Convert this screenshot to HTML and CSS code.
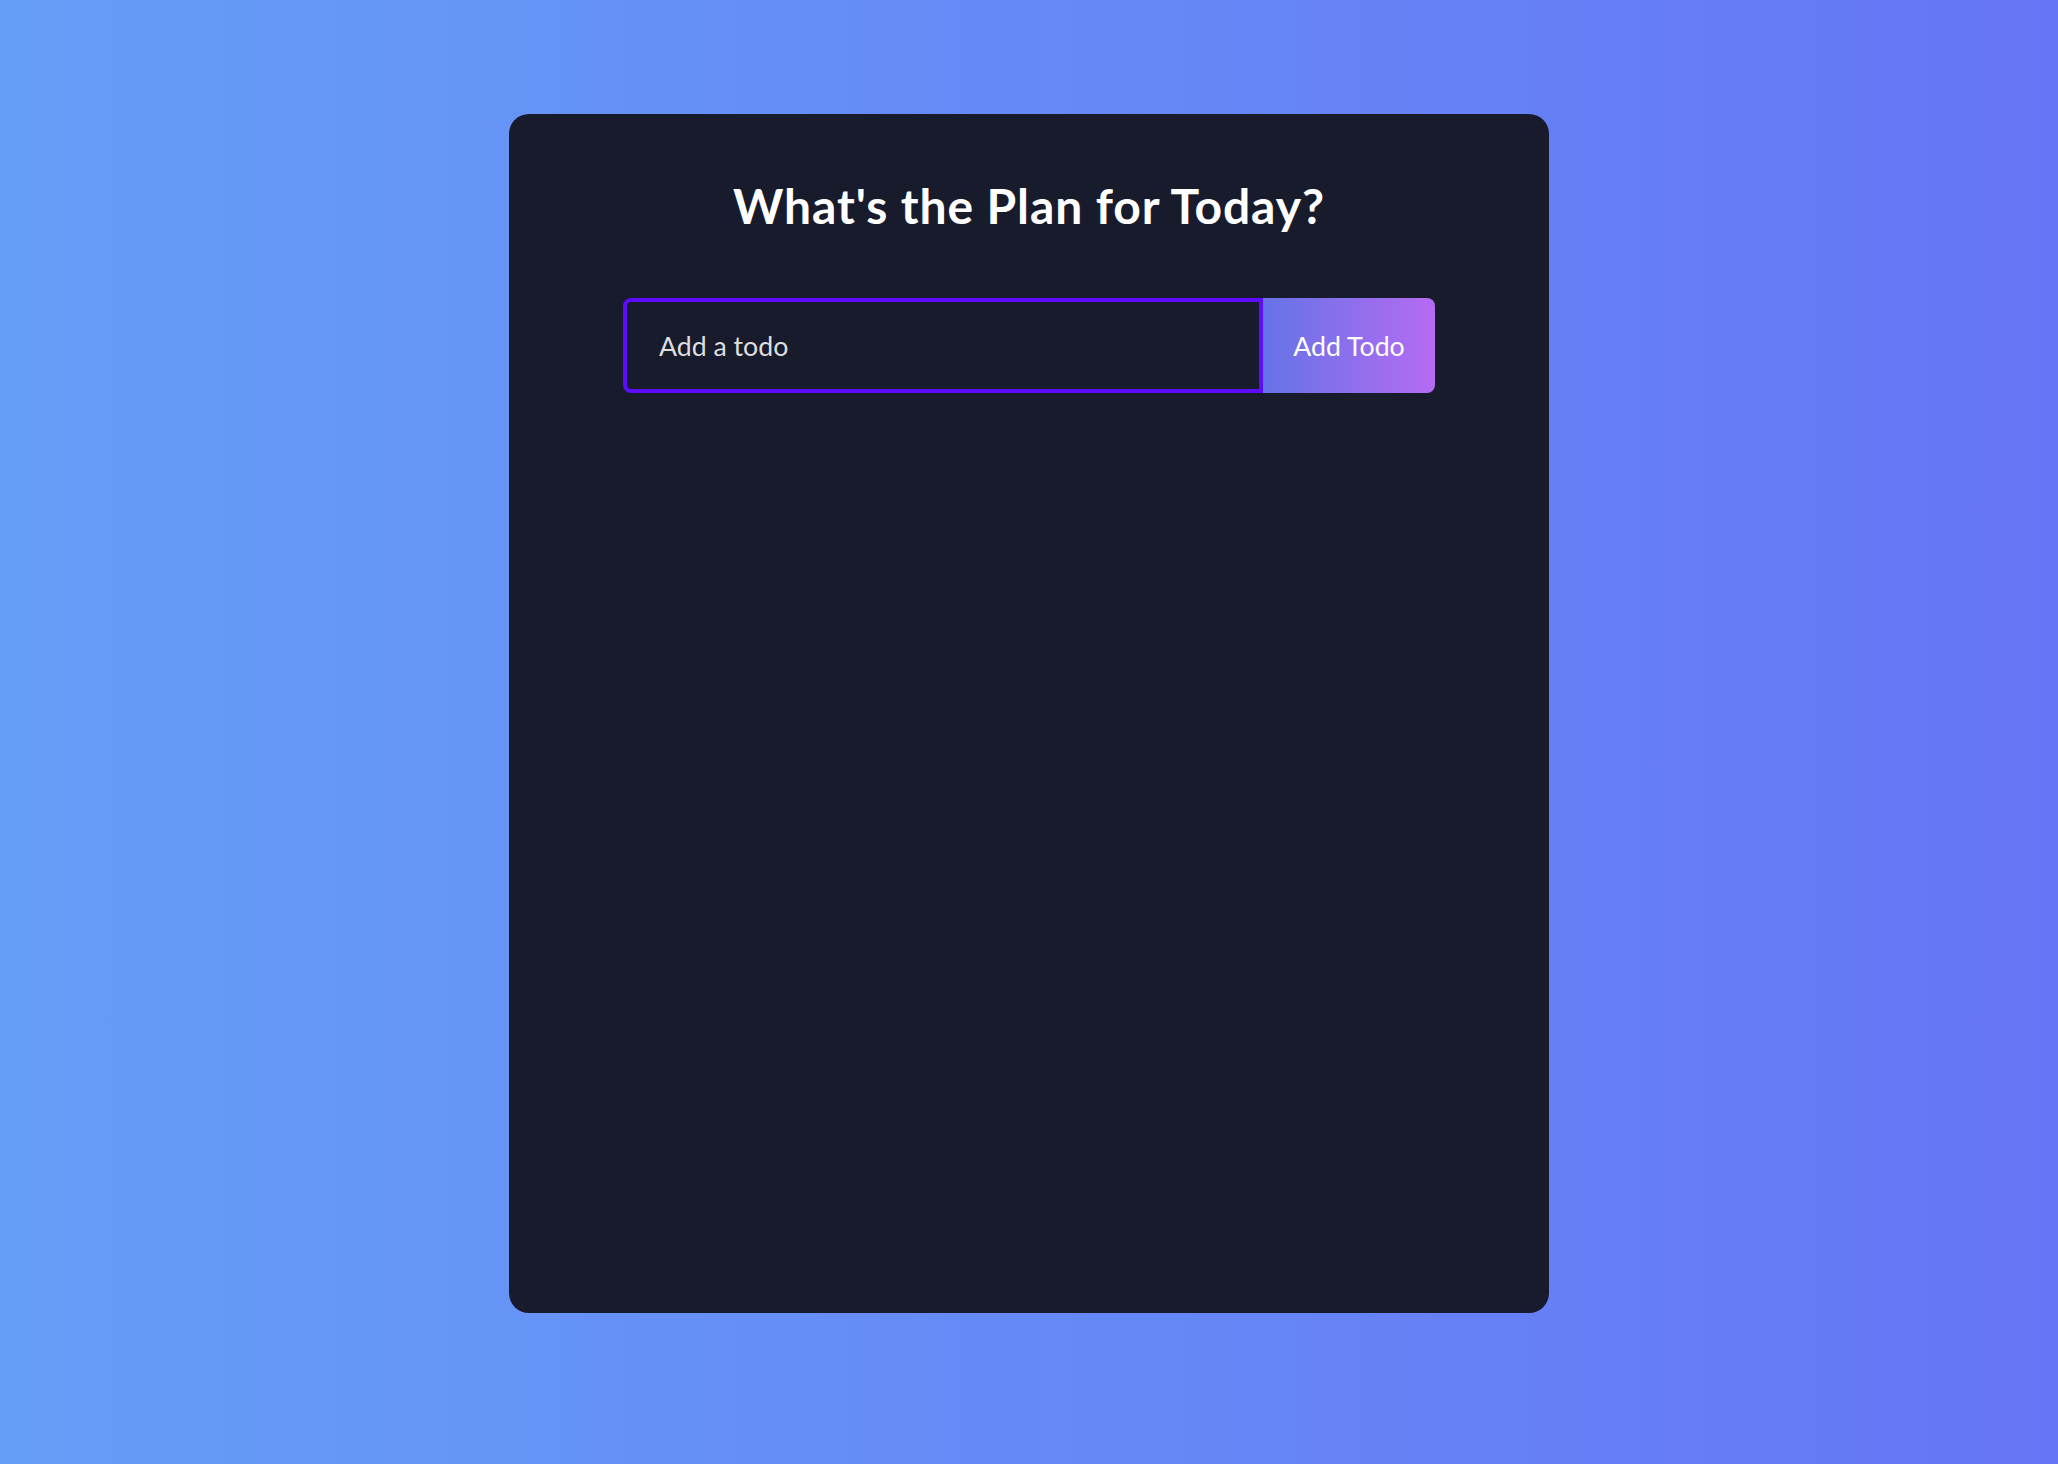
FILE: index.html
```html
<!DOCTYPE html>
<html lang="en">
<head>
<meta charset="utf-8">
<title>Todo App</title>
<link rel="stylesheet" href="styles.css">
</head>
<body>
<div class="todo-app">
  <h1 class="title">What's the Plan for Today?</h1>
  <form class="todo-form">
    <input class="todo-input" type="text" placeholder="Add a todo" name="text">
    <button class="todo-button" type="button">Add Todo</button>
  </form>
</div>
</body>
</html>
```
FILE: styles.css
```css
* { box-sizing: border-box; }
html, body { margin: 0; padding: 0; }
body {
  min-height: 1464px;
  background: linear-gradient(90deg, #659ef7 0%, #6675f5 100%);
  font-family: "Lato", "Open Sans", sans-serif;
  padding-top: 114px;
}
.todo-app {
  width: 1040px;
  min-height: 1199px;
  margin: 0 auto;
  background: #181b2c;
  border-radius: 20px;
  display: flex;
  flex-direction: column;
  align-items: center;
}
.title {
  margin: 64px 0 64px;
  color: #fff;
  font-size: 48px;
  font-weight: 700;
  line-height: 56px;
  letter-spacing: 0.9px;
  text-align: center;
}
.todo-form {
  display: flex;
}
.todo-input {
  width: 640px;
  height: 95px;
  padding: 0 32px;
  border: 4px solid #5d0cff;
  border-radius: 8px 0 0 8px;
  background: transparent;
  color: #fff;
  font-family: inherit;
  font-size: 26.7px;
  outline: none;
}
.todo-input::placeholder { color: #dedede; }
.todo-button {
  width: 172px;
  height: 95px;
  border: none;
  border-radius: 0 8px 8px 0;
  background: linear-gradient(90deg, #6573e6 0%, #b56bf3 100%);
  color: #fff;
  font-family: inherit;
  font-size: 26.7px;
  padding: 0;
}
```
